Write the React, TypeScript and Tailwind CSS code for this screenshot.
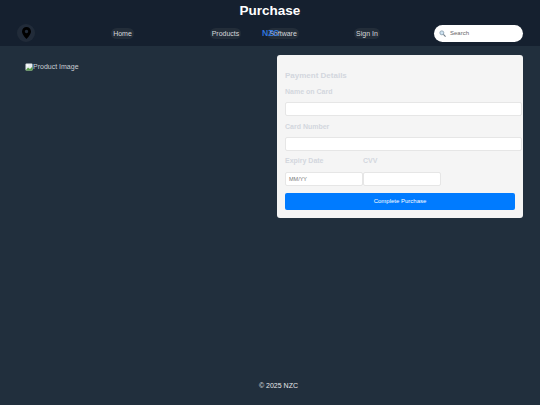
export default function App() {
  return (
    <div className="flex h-[405px] w-[540px] flex-col overflow-hidden bg-[#212f3d] font-['Liberation_Sans',Arial,sans-serif]">
      {/* Header */}
      <header className="relative h-[46px] shrink-0 bg-[#15202f]">
        <h1 className="pt-[3px] text-center text-[13.5px] leading-[16px] font-bold text-white">Purchase</h1>
        <div className="flex items-center pt-[5px] pl-[17px]">
          <div className="flex h-[18px] w-[18px] shrink-0 items-center justify-center rounded-full bg-[#212b39]">
            <svg width="9" height="12" viewBox="0 0 24 32">
              <path
                fill="#000"
                fillRule="evenodd"
                d="M12 0C5.4 0 0 5.4 0 12c0 8 12 20 12 20s12-12 12-20C24 5.4 18.6 0 12 0zm0 16.5a4.5 4.5 0 1 1 0-9 4.5 4.5 0 0 1 0 9z"
              />
            </svg>
          </div>
          <nav className="flex items-center text-[7px] leading-[11px] whitespace-nowrap text-[#d5d8dc]">
            <a className="ml-[76px] flex w-[23px] justify-center rounded-[6px] bg-[#232d39]">Home</a>
            <a className="ml-[76px] flex w-[31px] justify-center rounded-[6px] bg-[#232d39]">Products</a>
            <a className="ml-[26px] flex w-[32px] justify-center rounded-[6px] bg-[#232d39]">Software</a>
            <a className="ml-[55px] flex w-[26px] justify-center rounded-[6px] bg-[#232d39]">Sign In</a>
          </nav>
          <div className="ml-[54px] flex h-[17px] w-[89px] shrink-0 items-center rounded-full bg-white pl-[5px]">
            <svg width="7" height="7" viewBox="0 0 16 16" fill="none">
              <circle cx="6.5" cy="6.5" r="4.5" fill="#cfe3f2" stroke="#8aa0b0" strokeWidth="2" />
              <path d="M10 10l5 5" stroke="#6d7a85" strokeWidth="2.5" />
            </svg>
            <span className="ml-[4px] text-[6px] text-[#666]">Search</span>
          </div>
        </div>
        {/* logo text sits on top of the nav */}
        <span className="absolute top-[28px] left-[262px] text-[8.5px] leading-[11px] font-bold text-[#2f72d8]">NZC</span>
      </header>

      {/* Content */}
      <main className="flex flex-1 pt-[9px]">
        <div className="w-[277px] shrink-0 pt-[7px] pl-[25px]">
          <div className="flex items-center text-[7px] leading-[10px] text-[#c9ced4]">
            <svg width="8" height="8" viewBox="0 0 16 16">
              <rect x="1" y="1" width="14" height="14" rx="2" fill="#e8edf0" />
              <path d="M1 15l5-6 4 3 5-5v8H1z" fill="#5a9c4a" />
              <circle cx="5" cy="5" r="2" fill="#fff" />
            </svg>
            <span>Product Image</span>
          </div>
        </div>
        <div className="h-[163px] w-[246px] rounded-[3px] bg-[#f5f5f5] pt-[15px] pl-[8px]">
          <h2 className="text-[8px] leading-[11px] font-bold text-[#d3d7de]">Payment Details</h2>
          <label className="mt-[6px] block text-[7px] leading-[10px] font-bold text-[#d3d7de]">Name on Card</label>
          <div className="mt-[5px] h-[14px] w-[237px] rounded-[2px] border border-[#e6e6e6] bg-white" />
          <label className="mt-[6px] block text-[7px] leading-[10px] font-bold text-[#d3d7de]">Card Number</label>
          <div className="mt-[5px] h-[14px] w-[237px] rounded-[2px] border border-[#e6e6e6] bg-white" />
          <div className="mt-[5px] flex text-[7px] leading-[10px] font-bold text-[#d3d7de]">
            <label className="w-[78px]">Expiry Date</label>
            <label>CVV</label>
          </div>
          <div className="mt-[6px] flex">
            <div className="flex h-[14px] w-[78px] items-center rounded-[2px] border border-[#e6e6e6] bg-white pl-[3px] text-[5.5px] text-[#777]">
              MM/YY
            </div>
            <div className="h-[14px] w-[78px] rounded-[2px] border border-[#e6e6e6] bg-white" />
          </div>
          <button className="mt-[7px] block h-[17px] w-[230px] rounded-[2px] bg-[#007bff] text-[6px] text-white">
            Complete Purchase
          </button>
        </div>
      </main>

      {/* Footer */}
      <footer className="h-[24px] shrink-0 pl-[17px] text-center text-[7px] leading-[10px] text-[#e6e8ea]">© 2025 NZC</footer>
    </div>
  );
}
